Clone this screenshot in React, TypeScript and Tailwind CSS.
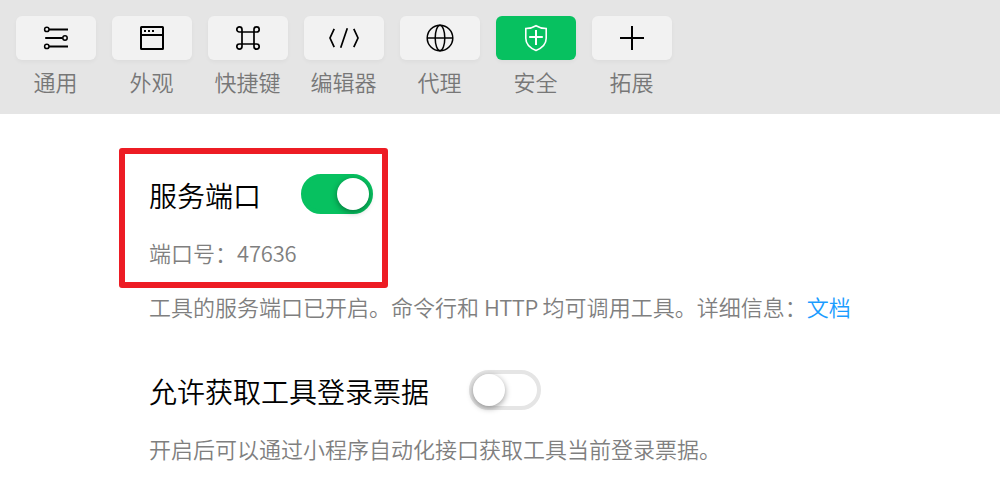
import type { ReactNode } from "react";

type Tab = { label: string; icon: ReactNode; active?: boolean };

const SlidersIcon = () => (
  <svg width="28" height="28" viewBox="0 0 28 28" fill="none" stroke="currentColor" strokeWidth="1.8">
    <circle cx="4.8" cy="5.4" r="2.2" strokeWidth="1.5" />
    <path d="M7 5.5H26M3.2 14H20.6M7 22.5H26" />
    <circle cx="23" cy="14" r="2.2" strokeWidth="1.5" />
    <circle cx="4.8" cy="22.4" r="2.2" strokeWidth="1.5" />
  </svg>
);

const WindowIcon = () => (
  <svg width="28" height="28" viewBox="0 0 28 28" fill="none" stroke="currentColor" strokeWidth="2">
    <rect x="3" y="3" width="22" height="22" rx="0.5" />
    <path d="M3 11H25" />
    <path d="M6 7H8M10 7H12M14 7H16" />
  </svg>
);

const CommandIcon = () => (
  <svg width="28" height="28" viewBox="0 0 28 28" fill="none" stroke="currentColor" strokeWidth="1.7">
    <path d="M8 8H20V20H8Z" />
    <path d="M8 8H5.4A2.6 2.6 0 1 1 8 5.4ZM20 8V5.4A2.6 2.6 0 1 1 22.6 8ZM20 20H22.6A2.6 2.6 0 1 1 20 22.6ZM8 20V22.6A2.6 2.6 0 1 1 5.4 20Z" />
  </svg>
);

const CodeIcon = () => (
  <svg width="32" height="28" viewBox="0 0 32 28" fill="none" stroke="currentColor" strokeWidth="1.7">
    <path d="M6.2 4.8L2 14L6.2 23.2M25.8 4.8L30 14L25.8 23.2M19.3 4.2L12.7 23.8" />
  </svg>
);

const GlobeIcon = () => (
  <svg width="28" height="28" viewBox="0 0 28 28" fill="none" stroke="currentColor" strokeWidth="1.5">
    <circle cx="14" cy="14" r="12.8" />
    <ellipse cx="14" cy="14" rx="4.8" ry="12.8" />
    <path d="M1 14H27" />
  </svg>
);

const ShieldIcon = () => (
  <svg width="28" height="28" viewBox="0 0 28 28" fill="none" stroke="currentColor" strokeWidth="1.6">
    <path d="M14 1.7Q18.2 4.3 24.2 4.5V14.2C24.2 20.3 19.7 24.1 14 26.4C8.3 24.1 3.8 20.3 3.8 14.2V4.5Q9.8 4.3 14 1.7Z" />
    <path d="M14 6V21M7.2 13H20.8" strokeWidth="2" />
  </svg>
);

const PlusIcon = () => (
  <svg width="28" height="28" viewBox="0 0 28 28" fill="none" stroke="currentColor" strokeWidth="2">
    <path d="M14 2V26M2 14H26" />
  </svg>
);

const tabs: Tab[] = [
  { label: "通用", icon: <SlidersIcon /> },
  { label: "外观", icon: <WindowIcon /> },
  { label: "快捷键", icon: <CommandIcon /> },
  { label: "编辑器", icon: <CodeIcon /> },
  { label: "代理", icon: <GlobeIcon /> },
  { label: "安全", icon: <ShieldIcon />, active: true },
  { label: "拓展", icon: <PlusIcon /> },
];

function Toggle({ on }: { on?: boolean }) {
  return (
    <button
      role="switch"
      aria-checked={!!on}
      className={`flex h-10 w-[72px] shrink-0 items-center rounded-full border-4 ${
        on ? "justify-end border-[#07c160] bg-[#07c160]" : "justify-start border-[#e5e5e5] bg-white"
      }`}
    >
      <span className="size-8 rounded-full bg-white shadow-[0_2px_6px_rgba(0,0,0,0.4)]" />
    </button>
  );
}

export default function App() {
  return (
    <div className="h-[491px] w-[1000px] overflow-hidden bg-white font-['Noto_Sans_CJK_SC',sans-serif] text-[22px] leading-8 font-[350] text-[#7f7f7f]">
      <nav className="flex h-[114px] gap-4 bg-[#e5e5e5] px-4 pt-4">
        {tabs.map((tab) => (
          <div key={tab.label} className="flex w-20 flex-col items-center gap-[5px]">
            <button
              className={`flex h-11 w-20 items-center justify-center rounded-md shadow-[0_2px_4px_rgba(0,0,0,0.04)] ${
                tab.active ? "bg-[#07c160] text-white" : "bg-[#f2f2f2] text-black"
              }`}
            >
              {tab.icon}
            </button>
            <span className="pr-px whitespace-nowrap text-[#777]">{tab.label}</span>
          </div>
        ))}
      </nav>
      <main className="pl-[119px]">
        <section className="pt-[34px]">
          <div className="h-[140px] w-[269px] rounded-[3px] border-6 border-[#ed1c24] pt-5 pl-6">
            <div className="flex h-10 items-center gap-10">
              <h2 className="pt-0.5 text-[28px] leading-10 text-black">服务端口</h2>
              <Toggle on />
            </div>
            <p className="mt-[22px]">
              端口号：<span className="tracking-[-0.2px]">47636</span>
            </p>
          </div>
          <p className="mt-0.5 pl-[30px] whitespace-nowrap">
            工具的服务端口已开启。命令行和 <span className="tracking-[-0.5px]">HTTP</span> 均可调用工具。详细信息：<a className="text-[#1a9cff]">文档</a>
          </p>
        </section>
        <section className="pt-12 pl-[30px]">
          <div className="flex h-10 items-center gap-10">
            <h2 className="pt-0.5 text-[28px] leading-10 text-black">允许获取工具登录票据</h2>
            <Toggle />
          </div>
          <p className="mt-[22px] whitespace-nowrap">开启后可以通过小程序自动化接口获取工具当前登录票据。</p>
        </section>
      </main>
    </div>
  );
}
